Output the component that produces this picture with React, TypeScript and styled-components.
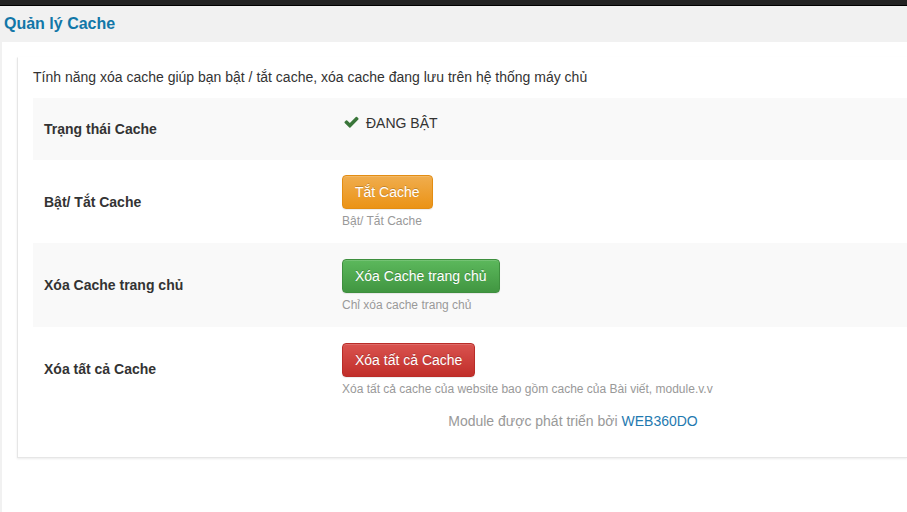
import React from "react";
import styled, { createGlobalStyle } from "styled-components";

const GlobalStyle = createGlobalStyle`
  html, body {
    margin: 0;
    padding: 0;
    background: #f1f1f1;
    font-family: "Liberation Sans", Arial, sans-serif;
    color: #333;
  }
  * { box-sizing: border-box; }
`;

const TopBar = styled.div`
  height: 6px;
  background: #232323;
  border-bottom: 1px solid #000;
`;

const PageHeader = styled.div`
  height: 36px;
  display: flex;
  align-items: center;
  padding-left: 4px;
  background: #f1f1f1;
`;

const Title = styled.h1`
  margin: 0;
  font-size: 16px;
  font-weight: bold;
  color: #1277a8;
`;

const Content = styled.div`
  margin-left: 2px;
  background: #fff;
  min-height: 470px;
  padding: 15px 0 0 15px;
`;

const Panel = styled.div`
  border: 1px solid #e6e6e6;
  border-top-color: #fff;
  border-right: none;
  box-shadow: 0 1px 2px rgba(0, 0, 0, 0.08);
  padding: 9px 0 26px 15px;
`;

const Intro = styled.p`
  margin: 0 0 11px;
  font-size: 14px;
  line-height: 20px;
  color: #333;
`;

const Row = styled.div<{ $striped?: boolean; $minHeight?: number }>`
  display: grid;
  grid-template-columns: 309px 1fr;
  align-items: center;
  background: ${(p) => (p.$striped ? "#f9f9f9" : "#fff")};
  min-height: ${(p) => (p.$minHeight ? `${p.$minHeight}px` : "auto")};
`;

const Label = styled.div`
  padding-left: 11px;
  font-size: 14px;
  font-weight: bold;
  color: #333;
`;

const Value = styled.div<{ $top?: number; $bottom?: number }>`
  align-self: start;
  padding-top: ${(p) => p.$top ?? 16}px;
  padding-bottom: ${(p) => p.$bottom ?? 13}px;
`;

const Status = styled.div`
  display: flex;
  align-items: center;
  gap: 6px;
  font-size: 14px;
  line-height: 20px;
  color: #333;
  padding-left: 1px;
`;

const tones = {
  warning: { from: "#f0ad4e", to: "#eb9316", border: "#e38d13" },
  success: { from: "#5cb85c", to: "#419641", border: "#3e8f3e" },
  danger: { from: "#d9534f", to: "#c12e2a", border: "#b92c28" },
};

const Button = styled.button<{ $tone: keyof typeof tones }>`
  display: inline-block;
  height: 34px;
  padding: 6px 12px;
  font-family: "Liberation Sans", Arial, sans-serif;
  font-size: 14px;
  line-height: 20px;
  color: #fff;
  text-shadow: 0 -1px 0 rgba(0, 0, 0, 0.2);
  border-radius: 4px;
  border: 1px solid ${(p) => tones[p.$tone].border};
  background-image: linear-gradient(
    to bottom,
    ${(p) => tones[p.$tone].from} 0%,
    ${(p) => tones[p.$tone].to} 100%
  );
  box-shadow: inset 0 1px 0 rgba(255, 255, 255, 0.15), 0 1px 1px rgba(0, 0, 0, 0.075);
  cursor: pointer;
`;

const Help = styled.div`
  margin-top: 4px;
  font-size: 12px;
  line-height: 17px;
  color: #999;
`;

const Footer = styled.div`
  padding-left: 309px;
  width: 771px;
  font-size: 14px;
  line-height: 20px;
  color: #999;
  text-align: center;
`;

const FooterLink = styled.a`
  color: #1f7ab0;
  text-decoration: none;
`;

const CheckIcon = () => (
  <svg width="17" height="14" viewBox="0 0 1792 1536" aria-hidden>
    <path
      fill="#3a763a"
      d="M1671 326q0 40-28 68l-724 724-136 136q-28 28-68 28t-68-28l-136-136-362-362q-28-28-28-68t28-68l136-136q28-28 68-28t68 28l294 295 656-657q28-28 68-28t68 28l136 136q28 28 28 68z"
    />
  </svg>
);

export default function App() {
  return (
    <>
      <GlobalStyle />
      <TopBar />
      <PageHeader>
        <Title>Quản lý Cache</Title>
      </PageHeader>
      <Content>
        <Panel>
          <Intro>
            Tính năng xóa cache giúp bạn bật / tắt cache, xóa cache đang lưu trên hệ thống máy chủ
          </Intro>

          <Row $striped $minHeight={62}>
            <Label>Trạng thái Cache</Label>
            <Value $top={15}>
              <Status>
                <CheckIcon />
                ĐANG BẬT
              </Status>
            </Value>
          </Row>

          <Row>
            <Label>Bật/ Tắt Cache</Label>
            <Value $top={15}>
              <Button $tone="warning">Tắt Cache</Button>
              <Help>Bật/ Tắt Cache</Help>
            </Value>
          </Row>

          <Row $striped>
            <Label>Xóa Cache trang chủ</Label>
            <Value>
              <Button $tone="success">Xóa Cache trang chủ</Button>
              <Help>Chỉ xóa cache trang chủ</Help>
            </Value>
          </Row>

          <Row>
            <Label>Xóa tất cả Cache</Label>
            <Value>
              <Button $tone="danger">Xóa tất cả Cache</Button>
              <Help>Xóa tất cả cache của website bao gồm cache của Bài viết, module.v.v</Help>
            </Value>
          </Row>

          <Footer>
            Module được phát triển bởi <FooterLink href="#">WEB360DO</FooterLink>
          </Footer>
        </Panel>
      </Content>
    </>
  );
}
